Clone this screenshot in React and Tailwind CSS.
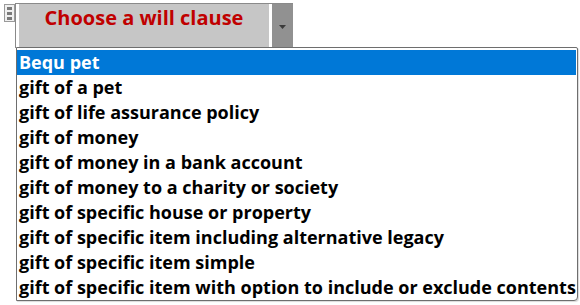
import React from 'react';

const items = [
  'Bequ pet',
  'gift of a pet',
  'gift of life assurance policy',
  'gift of money',
  'gift of money in a bank account',
  'gift of money to a charity or society',
  'gift of specific house or property',
  'gift of specific item including alternative legacy',
  'gift of specific item simple',
  'gift of specific item with option to include or exclude contents',
];

export default function App() {
  return (
    <div className="w-[580px] h-[305px] bg-white relative overflow-hidden" style={{ fontFamily: '"Open Sans", "Noto Sans", sans-serif' }}>
      {/* Combo box row */}
      <div className="flex items-start pt-[3px]">
        {/* drag handle */}
        <div className="ml-[4px] mt-[1px] w-[11px] h-[18px] border border-[#9a9a9a] bg-[#f0f0f0] flex flex-col items-center justify-center gap-[2px]">
          <div className="w-[5px] h-[3px] bg-[#7a7a7a]" />
          <div className="w-[5px] h-[3px] bg-[#7a7a7a]" />
          <div className="w-[5px] h-[3px] bg-[#7a7a7a]" />
        </div>
        <div className="flex h-[45px] border-l border-t border-[#8a8a8a]">
          <div className="w-[250px] ml-[3px] bg-[#c6c6c6] flex items-start justify-center">
            <span className="text-[#c00000] font-bold text-[20px] leading-[28px]">Choose a will clause</span>
          </div>
          <div className="w-[3px] bg-white" />
          <div className="w-[21px] bg-[#919191] flex items-start justify-center pt-[21px]">
            <svg width="7" height="4" viewBox="0 0 7 4"><path d="M0 0h7L3.5 4z" fill="#3a3a3a" /></svg>
          </div>
        </div>
      </div>
      {/* Dropdown list */}
      <div className="absolute left-[16px] top-[47px] w-[562px] h-[254px] border border-[#6e6e6e] rounded-br-[4px] rounded-tr-[2px] bg-white pt-[2px] shadow-[1px_1px_1px_rgba(0,0,0,0.15)]">
        {items.map((t, i) => (
          <div
            key={t}
            className={`h-[25px] pl-[2px] flex items-center font-bold text-[18px] whitespace-nowrap ${i === 0 ? 'bg-[#0078d7] text-white mr-[1px]' : 'text-black'}`}
          >
            {t}
          </div>
        ))}
      </div>
    </div>
  );
}
